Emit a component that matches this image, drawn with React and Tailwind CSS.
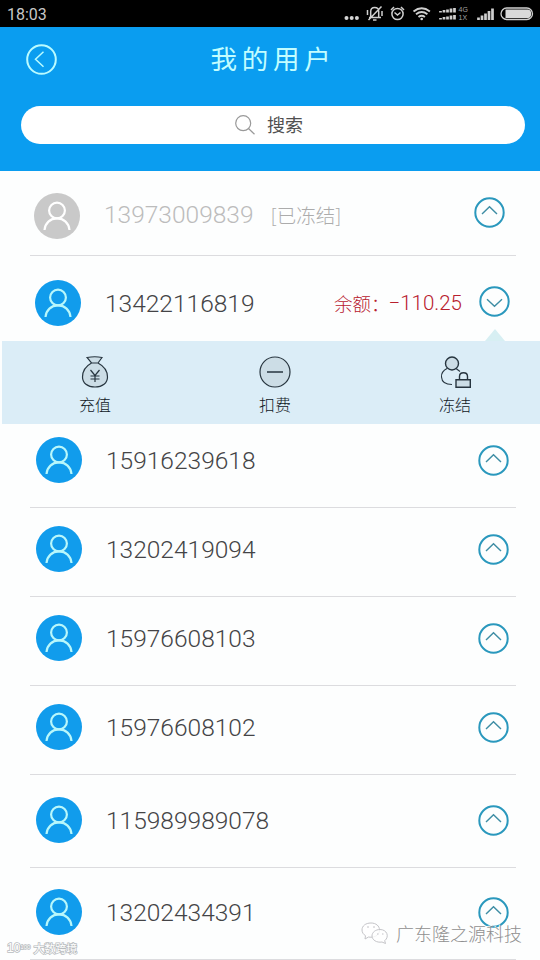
import { useState } from 'react'

const users = [
  { phone: '13973009839', frozen: true, row: 'h-[85px] pt-[5px] pl-[4px] pr-[11px]', text: 'ml-[24px] pb-[1px]', arrow: 'mb-[7px]' },
  { phone: '13422116819', balance: '-110.25', row: 'h-[85px] pt-[9px] pl-[5px] pr-[6px]', text: 'ml-[24px] pt-[2px]', arrow: 'mb-[3px]' },
  { phone: '15916239618', row: 'h-[84px] pb-[11px] pl-[6px] pr-[7px]', text: 'ml-[24px] pt-[2px]', arrow: '' },
  { phone: '13202419094', row: 'h-[89px] pb-[6px] pl-[6px] pr-[7px]', text: 'ml-[24px] pt-[2px]', arrow: '' },
  { phone: '15976608103', row: 'h-[89px] pb-[6px] pl-[6px] pr-[7px]', text: 'ml-[24px] pt-[2px]', arrow: '' },
  { phone: '15976608102', row: 'h-[89px] pb-[6px] pl-[6px] pr-[7px]', text: 'ml-[24px] pt-[2px]', arrow: '' },
  { phone: '115989989078', row: 'h-[93px] pb-[2px] pl-[6px] pr-[7px]', text: 'ml-[24px] pt-[2px]', arrow: '' },
  { phone: '13202434391', row: 'h-[92px] pb-[3px] pl-[6px] pr-[7px]', text: 'ml-[24px] pt-[2px]', arrow: '' },
]

function StatusBar() {
  return (
    <div className="flex h-[27px] shrink-0 items-center justify-between bg-black pr-[6px] pl-[7px] text-[#c8c8c8]">
      <span className="pt-[2px] font-['Roboto',sans-serif] text-[16px] leading-none">18:03</span>
      <svg width="192" height="27" viewBox="342 0 192 27" fill="none" stroke="#cfcfcf" strokeWidth="1.5">
        <g fill="#d6d6d6" stroke="none">
          <circle cx="346.5" cy="18" r="2" />
          <circle cx="351.7" cy="18" r="2" />
          <circle cx="356.9" cy="18" r="2" />
        </g>
        <path d="M369 17.500h12M370.7 17v-5.500c0-2.300 1.500-4 4-4s4 1.700 4 4V17M373 20h3.500M381.500 6.500l-13 13.500M367.500 10v5M382 11v5" />
        <circle cx="397.5" cy="14" r="5.600" />
        <path d="M394.500 12.500l3 2.500 3-2.500M391 10l3-3M404 10l-3-3" />
        <path d="M413.500 11.500q8.200-6.500 16.400 0M416 14.300q5.700-4.400 11.400 0M418.500 17q3.200-2.500 6.400 0" strokeWidth="1.900" />
        <circle cx="421.700" cy="19" r="1.300" fill="#d6d6d6" stroke="none" />
        <g strokeWidth="2.700">
          <path d="M440.500 12.500v-1.500M444 12.500v-2.500M447.500 12.500v-3M451 12.500v-4M454.500 12.500v-4.500" />
          <path d="M440.500 19.500v-1.500M444 19.500v-2.500M447.500 19.500v-3M451 19.500v-4M454.500 19.500v-4.500" />
        </g>
        <g fill="#a3a3a3" stroke="none" fontFamily="Liberation Sans, sans-serif" fontSize="7">
          <text x="458.500" y="12">4G</text>
          <text x="458.500" y="20">1X</text>
        </g>
        <path d="M478.500 20v-2.500M482 20v-4.500M485.500 20v-6.500M489 20v-9M492.500 20V8.500" strokeWidth="2.700" />
        <rect x="501" y="8" width="31.500" height="11.500" rx="5.700" strokeWidth="1.300" />
        <path d="M505.500 9.500H528c2 0 3.200 1.800 3.200 4.200s-1.200 4.300-3.200 4.300h-22.500z" fill="#d9d9d9" stroke="none" />
      </svg>
    </div>
  )
}

function Header() {
  return (
    <header className="flex h-[144px] shrink-0 flex-col bg-[#0a9df0] pr-[15px] pl-[21px]">
      <div className="grid h-[79px] grid-cols-[40px_1fr_40px] items-center pb-[14px]">
        <button className="ml-[5px] size-[31px]" aria-label="返回">
          <svg width="31" height="31" viewBox="0 0 31 31" fill="none" stroke="#b9fbff">
            <circle cx="15.500" cy="15.500" r="14.300" strokeWidth="2" />
            <path d="M17.500 7.800l-8 7.500 8 7.500" strokeWidth="1.500" />
          </svg>
        </button>
        <h1 className="pb-[2px] text-center text-[26.500px] leading-none tracking-[4.800px] text-[#c2fdff]">我的用户</h1>
      </div>
      <div className="flex h-[38px] items-center rounded-full bg-white pl-[214px] text-[#505050]">
        <svg width="20" height="20" viewBox="0 0 20 20" fill="none" stroke="#999" strokeWidth="1.200">
          <circle cx="8.200" cy="8.200" r="7.500" />
          <path d="M13.500 13.500l6 5.700" />
        </svg>
        <span className="ml-[12px] pb-[2px] text-[18px] leading-none">搜索</span>
      </div>
    </header>
  )
}

function Avatar({ frozen }) {
  return (
    <svg
      className={`shrink-0 rounded-full ${frozen ? 'bg-[#c9c9c9]' : 'bg-[#119cec]'}`}
      width="46"
      height="46"
      viewBox="0 0 46 46"
      fill="none"
      stroke={frozen ? '#ffffff' : '#b8f7fb'}
      strokeWidth="2.200"
    >
      <circle cx="23" cy="17.500" r="7.900" />
      <path d="M10.500 37c.6-7 5.700-11.600 12.500-11.600S34.900 30 35.500 37" />
    </svg>
  )
}

function Arrow({ open }) {
  return (
    <svg width="31" height="31" viewBox="0 0 31 31" fill="none">
      <circle cx="15.500" cy="15.500" r="14.200" stroke="#2a98bd" strokeWidth="2" />
      <path d={open ? 'M8 13.200l7.500 7 7.500-7' : 'M8 17l7.500-7.200L23 17'} stroke="#3e8da4" strokeWidth="1.400" />
    </svg>
  )
}

function RechargeIcon() {
  return (
    <svg width="32" height="32" viewBox="0 0 32 32" fill="#ccdde6" stroke="#27353f" strokeWidth="1.200">
      <path d="M8 1.500q8-1.500 15 0l-4 5.500h-6.500zM12.500 7Q3.500 12 3.500 21c0 6 5 10 12.500 10s12.500-4 12.500-10Q28.500 12 19 7z" />
      <path d="M11.500 14l4.500 5.500 4.500-5.500M16 19.500V26M11.500 20h9M11.500 23h9" fill="none" />
    </svg>
  )
}

function DeductIcon() {
  return (
    <svg width="32" height="32" viewBox="0 0 32 32" fill="#ccdde6" stroke="#27353f" strokeWidth="1.200">
      <circle cx="16" cy="16" r="15" />
      <path d="M8 16h16" strokeWidth="1.500" />
    </svg>
  )
}

function FreezeIcon() {
  return (
    <svg width="32" height="32" viewBox="0 0 32 32" fill="#ccdde6" stroke="#27353f" strokeWidth="1.400">
      <path d="M8 12.500C4 14.500 2.300 18 2.500 21c.3 4.500 4 7.500 10.500 7.500M17 12.500l4 3" fill="none" strokeWidth="1.100" />
      <circle cx="13" cy="7.500" r="6.500" />
      <path d="M20.500 24v-3.500c0-5 8-5 8 0V24" fill="none" />
      <path d="M17 23.800h14.300v7.400H17z" />
    </svg>
  )
}

const actions = [
  { label: '充值', icon: RechargeIcon },
  { label: '扣费', icon: DeductIcon },
  { label: '冻结', icon: FreezeIcon },
]

function ActionPanel() {
  return (
    <div className="relative ml-[2px] h-[83px] bg-[#dbedf7]">
      <span className="absolute -top-[12px] right-[35px] h-[12px] w-[20px] bg-[#d7eff3] [clip-path:polygon(50%_0,100%_100%,0_100%)]" />
      <div className="flex justify-between pt-[15px] pr-[68px] pl-[76px]">
        {actions.map(({ label, icon: Icon }) => (
          <button key={label} className="flex w-[34px] flex-col items-center gap-[8px] text-[16px] leading-none font-light text-[#10181e]">
            <Icon />
            <span className="whitespace-nowrap">{label}</span>
          </button>
        ))}
      </div>
    </div>
  )
}

function UserRow({ user, open, onToggle }) {
  return (
    <div>
      <div className={`mr-[24px] ml-[30px] flex items-center ${open ? '' : 'border-b border-[#dcdcdf]'} ${user.row}`}>
        <Avatar frozen={user.frozen} />
        <span className={`font-['Roboto',sans-serif] text-[24.500px] leading-none font-light ${user.frozen ? 'text-[#bcbcbc]' : 'text-[#444446]'} ${user.text}`}>
          {user.phone}
        </span>
        {user.frozen ? <span className="ml-[17px] pb-[2px] text-[19.500px] leading-none font-light text-[#acacac]">[已冻结]</span> : null}
        <div className="ml-auto flex items-center">
          {user.balance ? (
            <span className="mr-[17px] flex items-center text-[18.500px] leading-none font-light text-[#b8202e]">
              余额：<span className="-ml-px font-['Roboto',sans-serif] text-[20.500px]">{user.balance.replace('-', '−')}</span>
            </span>
          ) : null}
          <button onClick={onToggle} className={user.arrow} aria-label="展开">
            <Arrow open={open} />
          </button>
        </div>
      </div>
      {open ? <ActionPanel /> : null}
    </div>
  )
}

function Watermarks() {
  return (
    <>
      <div className="absolute right-[18px] bottom-[16px] flex items-center gap-[7px] text-[18px] leading-none font-light text-[#8f8f8f]">
        <svg width="28" height="22" viewBox="0 0 28 22" fill="#ffffffcc" stroke="#c4c4c8" strokeWidth="1">
          <path d="M10 1C4.500 1 1 4 1 8c0 2.500 1.500 4.500 3.500 5.700L4 17l3.500-2c4 .8 11-.5 11-7 0-4-3.500-7-8.500-7z" />
          <path d="M19 7.500c-4.500 0-8 2.800-8 6.500s4.500 7 10 6l3.500 1.500-.8-2.800c5-4 2.300-11.200-4.700-11.200z" />
          <path d="M6 5h2M12 5h2M16 12h1.500M21 12h1.500" />
        </svg>
        <span className="[text-shadow:-1px_-1px_0_#fff]">广东隆之源科技</span>
      </div>
      <div className="absolute bottom-[6px] left-[7px] flex items-center gap-[3px] text-[11px] leading-none text-white [-webkit-text-stroke:1.5px_#b8bcbe] [paint-order:stroke_fill]">
        <span className="font-['Liberation_Sans',sans-serif] text-[12px]">
          10<sup className="text-[6px]">100</sup>
        </span>
        <span>大数跨境</span>
      </div>
    </>
  )
}

export default function App() {
  const [openPhone, setOpenPhone] = useState('13422116819')

  return (
    <div className="relative flex h-[960px] w-[540px] flex-col overflow-hidden bg-[#fdfefe] font-['Noto_Sans_CJK_SC',sans-serif]">
      <StatusBar />
      <Header />
      <main>
        {users.map(user => (
          <UserRow
            key={user.phone}
            user={user}
            open={openPhone === user.phone}
            onToggle={() => setOpenPhone(current => (current === user.phone ? null : user.phone))}
          />
        ))}
      </main>
      <Watermarks />
    </div>
  )
}
